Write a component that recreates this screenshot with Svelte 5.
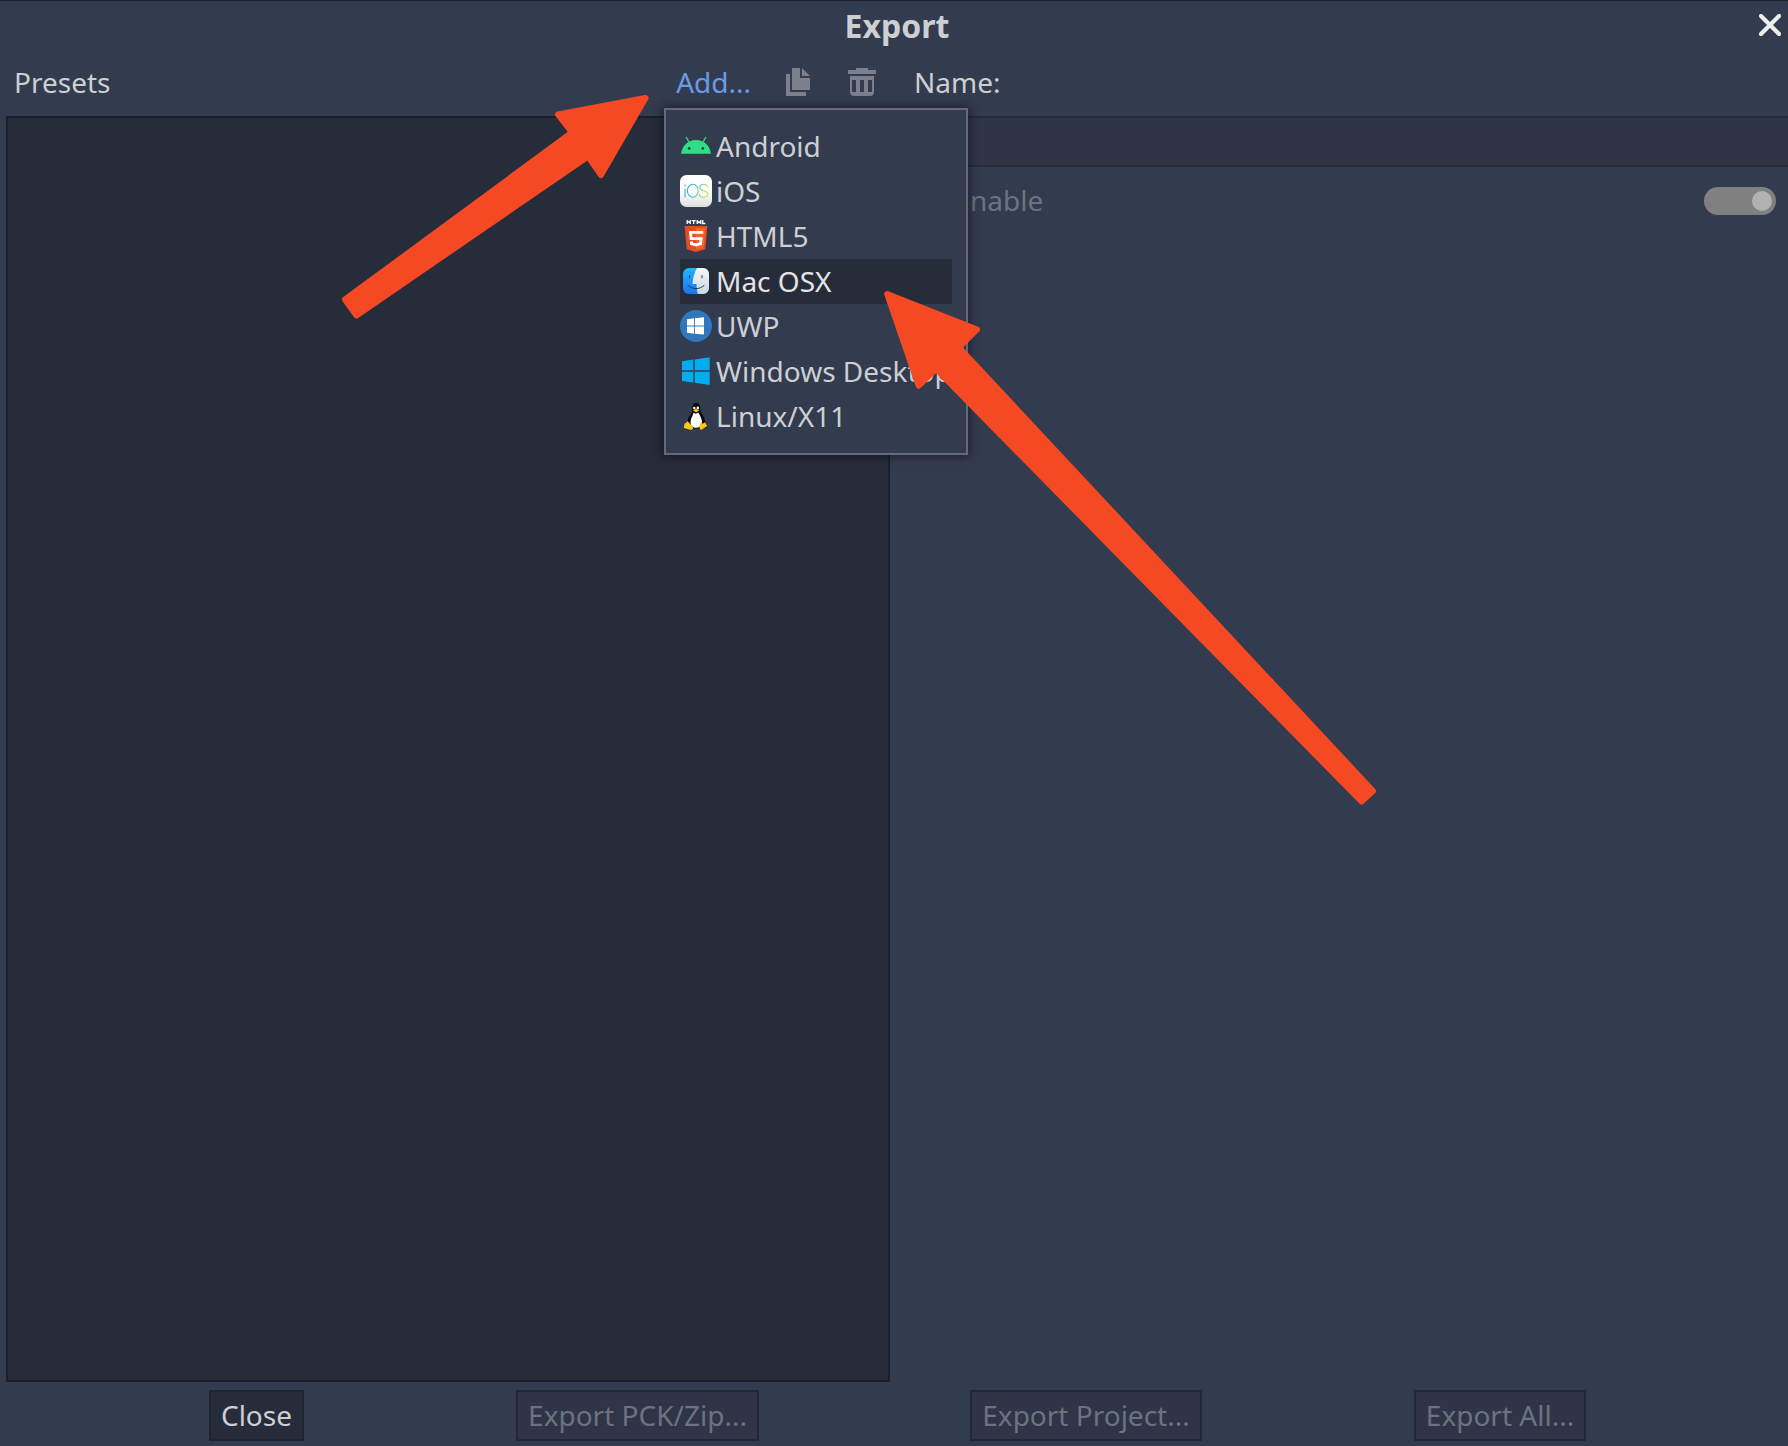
<script>
  const platforms = ['Android', 'iOS', 'HTML5', 'Mac OSX', 'UWP', 'Windows Desktop', 'Linux/X11'];
  let hovered = $state('Mac OSX');
</script>

<div class="window">
  <header class="titlebar">
    <h1>Export</h1>
    <button class="close-x" aria-label="Close window">
      <svg width="22" height="22" viewBox="0 0 22 22"><path d="M2 2 20 20M20 2 2 20" stroke="#ededed" stroke-width="4.2" stroke-linecap="round" /></svg>
    </button>
  </header>

  <main class="columns">
    <section class="left">
      <div class="bar">
        <span class="label">Presets</span>
        <button class="add">Add...</button>
        <svg class="copy" width="24" height="28" viewBox="0 0 24 28" fill="#7b808c">
          <path d="M0 6h4v18h16v4H0z" /><path d="M6 0h8v10h10v12H6z" /><path d="M16 0l8 8h-8z" />
        </svg>
        <svg class="trash" width="28" height="28" viewBox="0 0 28 28" fill="#7b808c">
          <path d="M8 0h12v2h8v4H0V2h8z" />
          <path fill-rule="evenodd" d="M2 8h24v16a4 4 0 0 1-4 4H6a4 4 0 0 1-4-4zM4 12v12h4V12zM12 12v12h4V12zM20 12v12h4V12z" />
        </svg>
      </div>
      <div class="presets"></div>
    </section>
    <section class="right">
      <div class="bar"><span class="label">Name:</span></div>
      <div class="name-input"></div>
      <div class="runnable">
        <span class="text">Runnable</span>
        <span class="toggle"><i></i></span>
      </div>
    </section>
  </main>

  <footer>
    <button class="btn close">Close</button>
    <button class="btn pck" disabled>Export PCK/Zip...</button>
    <button class="btn project" disabled>Export Project...</button>
    <button class="btn all" disabled>Export All...</button>
  </footer>

  <ul class="menu">
    {#each platforms as name}
      <li class:hovered={name === hovered}>
        <svg width="32" height="32" viewBox="0 0 32 32">
          {#if name === 'Android'}
            <path d="M6.300 7.400 9.300 12.500M25.700 7.400 22.700 12.500" stroke="#32de84" stroke-width="1.200" stroke-linecap="round" />
            <path d="M1 23.800C2 15.500 8 10 16 10S30 15.500 31 23.800z" fill="#32de84" />
            <circle cx="9.200" cy="18.400" r="1.300" fill="#26394b" /><circle cx="22.800" cy="18.400" r="1.300" fill="#26394b" />
          {:else if name === 'iOS'}
            <defs>
              <linearGradient id="tile" x2="0" y2="1"><stop offset=".5" stop-color="#fff" /><stop offset="1" stop-color="#dedede" /></linearGradient>
              <linearGradient id="ios" gradientUnits="userSpaceOnUse" x1="4" y1="10" x2="28" y2="22"><stop stop-color="#3b8cf0" /><stop offset=".45" stop-color="#45c3e3" /><stop offset=".7" stop-color="#8fdc70" /><stop offset="1" stop-color="#e3e82d" /></linearGradient>
            </defs>
            <rect width="32" height="32" rx="6.500" fill="url(#tile)" />
            <g fill="none" stroke="url(#ios)" stroke-width="1.100">
              <path d="M5 13.500 5.100 22.500M5 9.500 5.100 11.200" />
              <ellipse cx="12.800" cy="15.800" rx="5.400" ry="6.600" />
              <path d="M27.500 12.500C27 10.200 25.500 9.200 23.700 9.200c-4.800 0-5 5.200-1 6.200 3.200.8 5.300 1.300 5.200 3.700-.2 4.400-8.400 4.500-8.600-.4" />
            </g>
          {:else if name === 'HTML5'}
            <path d="M7.200 0v4M10.200 0v4M7.200 2h3M11.700.6h4M13.700.6V4M17.200 4V.8l1.800 2 1.800-2V4M22.700 0v3.500h2.600" fill="none" stroke="#fff" stroke-width="1.300" />
            <path d="M4.600 6h22.800l-2.100 23.200L16 32l-9.300-2.800z" fill="#e44d26" />
            <path d="M16 8h9.300l-1.800 19.700L16 30z" fill="#f16529" />
            <path d="M23.200 12.400H10.500l.6 6.200h10l-.5 5.100-4.600 1.300-4.500-1.300-.2-2.200" fill="none" stroke="#fff" stroke-width="2.900" />
          {:else if name === 'Mac OSX'}
            <defs>
              <linearGradient id="finder" x2="0" y2="1"><stop stop-color="#1cb8fb" /><stop offset="1" stop-color="#1d73f2" /></linearGradient>
              <linearGradient id="face" x2="0" y2="1"><stop stop-color="#f7f6f5" /><stop offset="1" stop-color="#cbd8e5" /></linearGradient>
            </defs>
            <rect x="3" y="3" width="26" height="26" rx="6" fill="url(#finder)" />
            <path d="M17 3h6a6 6 0 0 1 6 6v14a6 6 0 0 1-6 6h-5.300c-.8-3.200-1.200-6.500-1.200-10h-4C12.800 13 14.500 7.500 17 3z" fill="url(#face)" />
            <path d="M9.600 10.500v2.300M22 10.500v2.300M8 20.500c5 4.200 11.500 4.200 16 0" stroke="#1c3c5d" stroke-width="1" fill="none" stroke-linecap="round" />
          {:else if name === 'UWP'}
            <circle cx="16" cy="16" r="16" fill="#3076bc" />
            <path d="M7 9.300 14 8.300v7.200H7zM14.900 8.200 24 7.200v8.300h-9.100zM7 16.500h7v7.200l-7-1zM14.900 16.500H24V24.600l-9.100-.8z" fill="#fff" />
          {:else if name === 'Windows Desktop'}
            <path d="M2 6.300 13.300 4.600v10.700H2zM14.700 4.400 29.700 2.300v13H14.700zM2 16.700h11.300v10.700L2 26zM14.700 16.700h15V30l-15-2.200z" fill="#00adef" />
          {:else}
            <g transform="translate(0 1.400)">
              <path d="M12.300 6.500c0-3.500 1.200-5 3.700-5s4.200 1.700 4.200 5c0 3 .7 4.500 2.500 7 2.500 3.500 3.200 7.500 1.500 11.500L20 27h-8l-5-5c.5-4 1.500-6 3.500-8.800 1.800-2.500 1.800-3.700 1.800-6.700z" fill="#0a0a0a" />
              <path d="M13.500 11c1 1.500 3.700 1.500 5 0 .8 2.500 3.600 5.500 3.400 9.500-.2 4-3 5.800-6 5.800-3.500 0-5.500-2.500-5.300-6 .2-3.500 2.100-5.800 2.900-9.300z" fill="#fff" />
              <circle cx="14.300" cy="6.500" r="1.200" fill="#fff" /><circle cx="17.800" cy="6.500" r="1.300" fill="#fff" />
              <path d="M12.800 8.800 16 7.300l3.200 1.500-3 2.200z" fill="#f9c513" />
              <path d="M7.500 19.700 12.500 25c1.200 2 .2 3.300-1.700 3.300-2.200 0-4.300-1.100-6.700-1.600-.7-2 .4-2.600.6-4.700 1.300-.1 1.900-.9 2.800-2.300zM20.600 21c.8 1.400 2.600 1.600 4.200-.2.700.2.700 2 2.300 3.200-.8 1.500-2.900 2-4.200 3.600-1.300 1.200-3.400.8-3.400-1.200 0-2 .2-4 1.100-5.400z" fill="#fbc815" />
            </g>
          {/if}
        </svg>
        <span>{name}</span>
      </li>
    {/each}
  </ul>

  <!-- Callout arrows laid over the dialog -->
  <svg class="arrows" width="1788" height="1446" viewBox="0 0 1788 1446">
    <path d="M645.500 98 558 114.500 572 132.500 345 299.500 356.500 315.500 588 156.500 601 175z" />
    <path d="M887.200 294 977 329.500 959 347.500 1373 791 1361.500 801.500 936 369 918.700 385.700z" />
  </svg>
</div>

<style>
  :global(body) { margin: 0; background: #333b4f; }
  .window {
    position: relative; box-sizing: border-box; width: 1788px; height: 1446px; overflow: hidden;
    display: flex; flex-direction: column; background: #333b4e; border-top: 1px solid #202124;
    font: 28px/38px 'Noto Sans', sans-serif; color: #cdcfd3;
  }
  button { font: inherit; color: inherit; border: 0; padding: 0; background: none; }
  .titlebar { height: 51px; display: grid; grid-template-columns: 1fr auto; align-items: center; }
  h1 { grid-area: 1 / 1 / 2 / 3; margin: 0 0 2px 6px; text-align: center; font-size: 32px; font-weight: 700; }
  .close-x { grid-area: 1 / 2; display: flex; margin-right: 7px; margin-top: -3px; }
  .columns { flex: 0 0 1330px; display: flex; gap: 12px; padding-left: 6px; }
  .left { width: 884px; display: flex; flex-direction: column; }
  .right { flex: 1; display: flex; flex-direction: column; }
  .bar { flex: 0 0 64px; box-sizing: border-box; padding: 0 14px 4px 8px; height: 64px; display: flex; align-items: center; }
  .right .bar { padding-left: 12px; }
  .bar .label { flex: 1; }
  .add { color: #699ce8; }
  .copy { margin-left: 35px; }
  .trash { margin-left: 38px; }
  .presets { flex: 1; box-sizing: border-box; background: #272c3b; border: 2px solid #1a1f2b; }
  .name-input { box-sizing: border-box; height: 51px; background: #2f3447; border: solid #262b3a; border-width: 2px 0 2px 2px; }
  .runnable { height: 68px; display: flex; align-items: center; justify-content: space-between; padding: 0 12px 0 16px; color: #6c7281; }
  .runnable .text { padding-bottom: 2px; }
  .toggle { box-sizing: border-box; width: 72px; height: 28px; border-radius: 14px; background: #808080; padding: 4px; display: flex; justify-content: flex-end; }
  .toggle i { width: 20px; height: 20px; border-radius: 50%; background: #b2b2b2; }
  footer { display: flex; padding: 8px 0 0 209px; }
  .btn { box-sizing: border-box; height: 51px; padding-bottom: 2px; border: 2px solid #222736; background: #2f3447; color: #6c7281; white-space: nowrap; }
  .btn.close { width: 95px; background: #272c3b; border-color: #1f2431; color: #cdcfd3; }
  .pck { width: 243px; margin-left: 212px; }
  .project { width: 232px; margin-left: 211px; }
  .all { width: 172px; margin-left: 212px; }
  .menu {
    position: absolute; left: 664px; top: 107px; box-sizing: border-box; width: 304px; height: 347px; margin: 0;
    padding: 14px; list-style: none; background: #333b4e; border: 2px solid #646a7b; box-shadow: 0 0 8px 2px rgba(12, 14, 24, .55);
  }
  .menu li { height: 45px; display: flex; align-items: center; gap: 4px; line-height: 45px; white-space: nowrap; }
  .menu li.hovered { background: #272c3b; color: #e3e4e6; }
  .menu svg { flex: none; margin-bottom: 1px; }
  .arrows { position: absolute; left: 0; top: -1px; pointer-events: none; fill: #f54924; stroke: #f54924; stroke-width: 6; stroke-linejoin: round; }
</style>
